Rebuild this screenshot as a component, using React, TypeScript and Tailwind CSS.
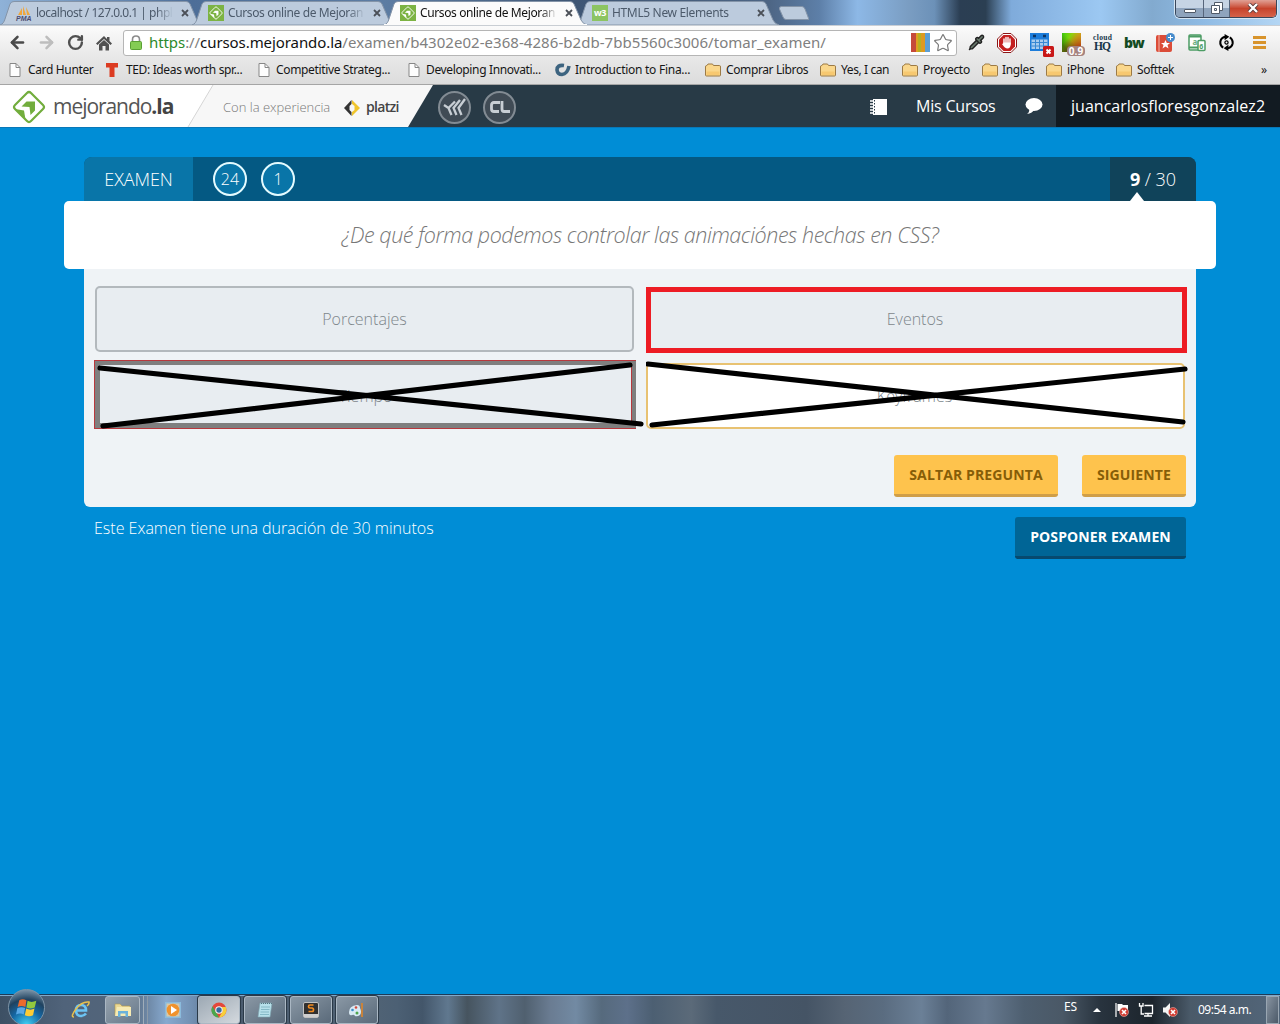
import React from "react";
import { ArrowLeft, ArrowRight, RotateCw, Star, Pipette } from "lucide-react";

function MejorandoMark({ className, color = "#fff" }: { className: string; color?: string }) {
  return (
    <svg viewBox="0 0 34 34" className={className} fill="none">
      <path d="M15 3Q17 1 19 3L31 15Q33 17 31 19L19 31Q17 33 15 31L3 19Q1 17 3 15Z" stroke={color} strokeWidth="2.200" />
      <path d="M9.500 16.500L14.500 11.500H23V20.500L18.500 25L17.500 17Z" fill={color} />
      <path d="M3 19L12 20.500L13.500 29.500Z" fill={color} />
    </svg>
  );
}

function SiteFavicon() {
  return (
    <span className="flex size-4 items-center justify-center bg-[#7cb343]">
      <MejorandoMark className="size-[14px]" />
    </span>
  );
}

function PmaFavicon() {
  return (
    <svg viewBox="0 0 16 16" className="size-4 overflow-visible">
      <path d="M2 10L6 3V10ZM7 10V1L10 10ZM11 10L10 2L14 10Z" fill="#f0a63c" />
      <text x="0" y="16" fontSize="7" fontWeight="700" fontStyle="italic" fontFamily="Liberation Sans, sans-serif" fill="#4c4c70">PMA</text>
    </svg>
  );
}

function W3Favicon() {
  return (
    <span className="flex size-4 items-center justify-center bg-[#8cc462] font-['Open_Sans',sans-serif] text-[9px] font-bold leading-none tracking-[-0.5px] text-white">w3</span>
  );
}

function Tab({ icon, label, active, track }: { icon: React.ReactNode; label: string; active?: boolean; track: string }) {
  return (
    <div className={`relative flex h-[25px] w-48 shrink-0 items-center pl-4 ${active ? "z-10" : ""}`}>
      <svg viewBox="0 0 206 25" className="absolute left-0 top-0 h-[25px] w-[206px]" fill="none">
        <path
          d="M0 25C3 24 4 22 5 19L10 4Q11 1.500 14 1.500H186Q189 1.500 190 4L197 20Q199 24 203 25Z"
          fill={active ? "#fbfbfb" : "#bccbdd"}
          stroke="#8494a8"
          strokeWidth="1"
        />
        {active && <path d="M0 25H203" stroke="#fbfbfb" strokeWidth="2" />}
      </svg>
      <span className="relative flex shrink-0">{icon}</span>
      <span className={`relative ml-1 w-[140px] whitespace-nowrap text-[12px] ${track} ${active ? "text-[#111]" : "text-[#4c5a6b]"} [mask-image:linear-gradient(to_right,black_86%,transparent_98%)]`}>{label}</span>
      <svg viewBox="0 0 8 8" className="relative ml-[5px] size-2 shrink-0">
        <path d="M1 1L7 7M7 1L1 7" stroke="#4b5058" strokeWidth="1.800" />
      </svg>
    </div>
  );
}

function PageIcon() {
  return (
    <svg viewBox="0 0 12 14" className="h-[14px] w-3">
      <path d="M1 .5H7L11 4.500V13.500H1Z" fill="#fdfdfd" stroke="#878787" />
      <path d="M7 .5V4.500H11" fill="none" stroke="#878787" />
    </svg>
  );
}

function FolderIcon() {
  return (
    <svg viewBox="0 0 16 14" className="h-[14px] w-4">
      <path d="M.5 12V4Q.5 2.500 1.500 2.500H2L3 1H7.500L8.500 2.500H14.500Q15.500 2.500 15.500 4V12Q15.500 13 14.500 13H1.500Q.5 13 .5 12Z" fill="#fad78c" stroke="#9c7a45" />
      <path d="M1.500 8.500H14.500V12H1.500Z" fill="#f7c870" />
    </svg>
  );
}

function TedIcon() {
  return (
    <svg viewBox="0 0 12 14" className="h-[14px] w-3">
      <path d="M0 0H12V4.500H8.500V14H3.500V4.500H0Z" fill="#dc3c22" />
    </svg>
  );
}

function CourseraIcon() {
  return (
    <svg viewBox="0 0 16 14" className="h-[14px] w-4" fill="none">
      <path d="M9 2.500Q2 1.500 2 7Q2.500 11.500 7 11.500Q12.500 11 14 3" stroke="#3d6480" strokeWidth="3.600" />
    </svg>
  );
}

const bookmarks: { icon: React.ReactNode; label: string; w: string; gap: string; track: string }[] = [
  { icon: <PageIcon />, label: "Card Hunter", w: "w-[97px]", gap: "ml-[7px]", track: "tracking-[-0.35px]" },
  { icon: <TedIcon />, label: "TED: Ideas worth spr...", w: "w-[152px]", gap: "ml-2", track: "tracking-[-0.36px]" },
  { icon: <PageIcon />, label: "Competitive Strateg...", w: "w-[150px]", gap: "ml-[6px]", track: "tracking-[-0.34px]" },
  { icon: <PageIcon />, label: "Developing Innovati...", w: "w-[147px]", gap: "ml-[6px]", track: "tracking-[-0.36px]" },
  { icon: <CourseraIcon />, label: "Introduction to Fina...", w: "w-[150px]", gap: "ml-1", track: "tracking-[-0.27px]" },
  { icon: <FolderIcon />, label: "Comprar Libros", w: "w-[115px]", gap: "ml-[5px]", track: "tracking-[-0.38px]" },
  { icon: <FolderIcon />, label: "Yes, I can", w: "w-[82px]", gap: "ml-[5px]", track: "tracking-[-0.4px]" },
  { icon: <FolderIcon />, label: "Proyecto", w: "w-20", gap: "ml-[5px]", track: "tracking-[-0.3px]" },
  { icon: <FolderIcon />, label: "Ingles", w: "w-16", gap: "ml-[4px]", track: "tracking-[-0.35px]" },
  { icon: <FolderIcon />, label: "iPhone", w: "w-[70px]", gap: "ml-[5px]", track: "tracking-[-0.35px]" },
  { icon: <FolderIcon />, label: "Softtek", w: "w-[70px]", gap: "ml-[5px]", track: "tracking-[-0.4px]" },
];

function WindowButtons() {
  return (
    <div className="absolute right-[3px] top-0 flex h-[18px] w-[102px] overflow-hidden rounded-b-[5px] border border-t-0 border-[#39465a] shadow-[0_0_0_1px_#d5e5f3]">
      <div className="flex w-7 items-center justify-center border-r border-[#56657b] bg-linear-to-b from-[#c6d4e4] from-45% to-[#8fa4bd] to-50%">
        <span className="mt-1 h-1 w-3 rounded-[1px] border border-[#505a68] bg-white" />
      </div>
      <div className="flex w-[26px] items-center justify-center border-r border-[#56657b] bg-linear-to-b from-[#c6d4e4] from-45% to-[#8fa4bd] to-50%">
        <svg viewBox="0 0 12 12" className="mb-[2px] size-3" fill="#fff" stroke="#505a68">
          <path d="M3.500 .5H11.500V8.500H3.500Z" />
          <path d="M.5 3.500H8.500V11.500H.5Z" />
          <path d="M3.500 6.500H5.500V8.500H3.500Z" />
        </svg>
      </div>
      <div className="flex flex-1 items-center justify-center bg-linear-to-b from-[#e0a095] from-0% via-[#c6432c] via-50% to-[#d5624a]">
        <svg viewBox="0 0 12 10" className="mb-[2px] h-[10px] w-3">
          <path d="M2 1L10 9M10 1L2 9" stroke="#5c3a3a" strokeWidth="4" />
          <path d="M2 1L10 9M10 1L2 9" stroke="#fff" strokeWidth="2.400" />
        </svg>
      </div>
    </div>
  );
}

function Extensions() {
  return (
    <div className="flex h-[22px] items-center">
      <span className="ml-[9px] flex w-5 justify-center"><Pipette className="size-[17px] fill-[#6a7a6e] text-[#222]" strokeWidth={2} /></span>
      <svg viewBox="0 0 20 20" className="ml-[11px] size-5">
        <path d="M6 .5H14L19.500 6V14L14 19.500H6L.5 14V6Z" fill="#fff" stroke="#8c1616" />
        <path d="M6.500 2H13.500L18 6.500V13.500L13.500 18H6.500L2 13.500V6.500Z" fill="#c41f1f" />
        <path d="M7 11V6M9 10V4.500M11 10V4.500M13 11V6" stroke="#fff" strokeWidth="1.400" strokeLinecap="round" />
        <path d="M6.300 9.500H13.700V12Q13 15.500 10.500 15.500Q8 15.500 5 11L6.300 10.500Z" fill="#fff" />
      </svg>
      <svg viewBox="0 0 26 24" className="ml-[13px] mt-1 h-6 w-[26px]">
        <path d="M0 0H19V18H0Z" fill="#1c7cda" />
        <path d="M1.500 6.500H17.500V16H1.500Z" fill="#a9ccee" />
        <path d="M1.500 9.500H17.500M1.500 13H17.500M5.500 6.500V16M9.500 6.500V16M13.500 6.500V16" stroke="#3988d2" />
        <path d="M3 3H6M13 3H16" stroke="#0b3464" strokeWidth="2.400" />
        <rect x="13" y="13" width="11" height="11" rx="1.500" fill="#c81818" />
        <path d="M16.500 16.500L20.500 20.500M20.500 16.500L16.500 20.500" stroke="#fff" strokeWidth="2" />
      </svg>
      <div className="relative ml-[6px] h-[19px] w-[19px] bg-[linear-gradient(135deg,#40d010_0%,#78d808_30%,#b09010_50%,#b03c10_80%)]">
        <div className="h-full w-full bg-[linear-gradient(225deg,#f0b02088,transparent_45%,#04400888_80%)]" />
        <div className="absolute -bottom-[4px] left-[5px] h-[10px] w-[18px] rounded-sm bg-[#a5837f] text-center font-['Open_Sans',sans-serif] text-[10px] font-bold leading-[10px] text-white">0.9</div>
      </div>
      <svg viewBox="0 0 20 16" className="ml-3 h-4 w-5 overflow-visible" fill="#16364a" fontFamily="Liberation Serif, serif" fontWeight="700">
        <text x="0" y="5" fontSize="7.500" textLength="19">cloud</text>
        <text x="1" y="15" fontSize="11.500" textLength="17">HQ</text>
      </svg>
      <span className="ml-[11px] w-[22px] font-['Open_Sans',sans-serif] text-[14px] font-extrabold leading-5 tracking-[-0.9px] text-[#134a22]">bw</span>
      <svg viewBox="0 0 20 20" className="ml-[9px] size-5">
        <rect x="1" y="2" width="16" height="17" rx="2" fill="#db4c38" />
        <path d="M4 2V19" stroke="#f4b5aa" />
        <path d="M10.500 7L11.800 10H15L12.500 12L13.500 15.500L10.500 13.500L7.500 15.500L8.500 12L6 10H9.200Z" fill="#fff" />
        <circle cx="15.500" cy="4.500" r="4.500" fill="#478ccc" />
        <path d="M15.500 2V7M13 4.500H18" stroke="#fff" />
      </svg>
      <svg viewBox="0 0 20 20" className="ml-[12px] size-5" fill="#fff" stroke="#4c9c64" strokeWidth="1.500">
        <rect x="2" y="2" width="12" height="15" rx="1" />
        <path d="M2 3.500H14M2 14.500H14" strokeWidth="2" />
        <rect x="11" y="7.500" width="7" height="10" rx="1" />
        <text x="5.500" y="11.500" fontSize="8" fontWeight="700" fill="#6fae80" stroke="none">a</text>
        <text x="12.200" y="15.500" fontSize="7" fontWeight="700" fill="#4c9c64" stroke="none">6</text>
      </svg>
      <svg viewBox="0 0 18 18" className="ml-[11px] size-[17px]" fill="none" stroke="#000" strokeWidth="2.200">
        <path d="M5.500 14.500Q2 12 2.500 8Q3.500 3.500 8 3M12.500 3.500Q16 6 15.500 10Q14.500 14.500 10 15" />
        <path d="M7 0L12 3L7 6.500ZM11 11.500L6 15L11 18Z" fill="#000" stroke="none" />
        <circle cx="9" cy="9" r="1.700" strokeWidth="1.300" />
      </svg>
      <div className="ml-[18px] flex w-[13px] flex-col gap-[2px]">
        <span className="h-[3px] bg-[#d8942c]" />
        <span className="h-[3px] bg-[#d8942c]" />
        <span className="h-[3px] bg-[#d8942c]" />
      </div>
    </div>
  );
}

function Browser() {
  return (
    <div className="h-[85px] shrink-0 font-['Noto_Sans',sans-serif]">
      <div className="relative flex h-[25px] bg-[linear-gradient(90deg,#8fb2d8_0%,#4d6e98_15%,#5d7da3_30%,#3f5674_45%,#4d6584_60%,#5d7fa8_64%,#8db8e6_67%,#7a9dc2_71%,#6c91b8_73%,#2b3e53_75%,#2b3f52_77%,#7fabdb_79%,#9cc8f2_86%,#82aacf_90%,#8fbbe4_94%,#b4d6f4_100%)]">
        <Tab icon={<PmaFavicon />} label="localhost / 127.0.0.1 | phpl" track="tracking-[-0.5px]" />
        <Tab icon={<SiteFavicon />} label="Cursos online de Mejoran" track="tracking-[-0.38px]" />
        <Tab icon={<SiteFavicon />} label="Cursos online de Mejoran" active track="tracking-[-0.38px]" />
        <Tab icon={<W3Favicon />} label="HTML5 New Elements" track="tracking-[-0.35px]" />
        <svg viewBox="0 0 30 14" className="ml-[11px] mt-[6px] h-[14px] w-[30px]">
          <path d="M2 .5H23Q25 .5 26 3L30 13.500H7Q5 13.500 4 11L0 2Z" fill="#bccbdd" stroke="#8494a8" />
        </svg>
        <WindowButtons />
      </div>
      <div className="flex h-[32px] items-center border-t border-[#c9ced4] bg-linear-to-b from-[#fbfbfb] to-[#e8e8e8] pt-[2px]">
        <ArrowLeft className="ml-2 size-[19px] text-[#4a4a4a]" strokeWidth={3.2} />
        <ArrowRight className="ml-[10px] size-[19px] text-[#bdbdbd]" strokeWidth={3.2} />
        <RotateCw className="ml-[11px] size-[17px] text-[#505050]" strokeWidth={3.4} />
        <svg viewBox="0 0 16 16" className="ml-[12px] size-[16px]" fill="#505050">
          <path d="M8 1L0 8.500L1.500 10L8 4L14.500 10L16 8.500L13.500 6V2H11V4Z" />
          <path d="M3 9.500L8 5L13 9.500V15.500H9.500V11H6.500V15.500H3Z" />
        </svg>
        <div className="ml-[11px] flex h-[26px] w-[834px] shrink-0 items-center rounded-[3px] border border-[#b5b5b5] bg-white pl-[6px]">
          <svg viewBox="0 0 12 15" className="h-[15px] w-3">
            <path d="M2.500 7V4.500Q2.500 1 6 1T9.500 4.500V7" fill="none" stroke="#8b8b8b" strokeWidth="1.600" />
            <rect x=".5" y="6.500" width="11" height="8" rx="1" fill="#84cc54" stroke="#5aa034" />
          </svg>
          <span className="mb-[2px] ml-[7px] w-[750px] whitespace-nowrap text-[15px] leading-5 text-[#808080]">
            <span className="tracking-[-0.08px]"><span className="text-[#2c8a2c]">https</span>://<span className="text-[#111]">cursos.mejorando.la</span></span><span className="tracking-[0.05px]">/examen/b4302e02-e368-4286-b2db-7bb5560c3006/tomar_examen/</span>
          </span>
          <span className="ml-[12px] h-[19px] w-[19px] shrink-0 bg-[linear-gradient(90deg,#c54a3a_0_27%,#e0a020_27%_38%,#b8b020_38%_55%,#dd9a20_55%_75%,#5c9fd4_75%)]" />
          <Star className="ml-[3px] size-[20px] shrink-0 text-[#777]" strokeWidth={1.4} />
        </div>
        <Extensions />
      </div>
      <div className="flex h-[28px] items-center border-b border-[#a5a5a5] bg-linear-to-b from-[#e8e8e8] to-[#dcdcdc] pb-[2px] pl-[9px] text-[12px] text-[#161616]">
        {bookmarks.map((b) => (
          <div key={b.label} className={`flex shrink-0 items-center whitespace-nowrap ${b.w}`}>
            {b.icon}
            <span className={`${b.gap} ${b.track}`}>{b.label}</span>
          </div>
        ))}
        <span className="ml-auto pr-[13px] text-[12px]">»</span>
      </div>
    </div>
  );
}

function SiteHeader() {
  return (
    <header className="relative flex h-[42px] shrink-0 items-center bg-[#283a46] text-white">
      <svg viewBox="0 0 434 42" className="absolute left-0 top-0 h-[42px] w-[434px]">
        <path d="M0 0H433L408 42H0Z" fill="#f7f7f7" />
        <path d="M0 0H213L188 42H0Z" fill="#fff" />
        <path d="M213 0L188 42" stroke="#d5d5d5" />
      </svg>
      <div className="relative flex h-full w-[434px] items-center">
        <MejorandoMark className="ml-3 mt-[2px] size-[34px]" color="#72ad3d" />
        <span className="ml-[7px] mt-px w-[121px] whitespace-nowrap text-[21px] tracking-[-1.05px] text-[#555]">mejorando<b className="text-[#444]">.la</b></span>
        <span className="ml-[49px] mt-[3px] w-[108px] whitespace-nowrap text-[13px] font-light text-[#777]">Con la experiencia</span>
        <svg viewBox="0 0 16 16" className="ml-[13px] mt-[3px] size-4">
          <path d="M7.500 0L0 8L7.500 16V12L5.500 10V6L7.500 4Z" fill="#333" />
          <path d="M8 0L16 8L8 16V12L10.500 10V6L8 4Z" fill="#f0c52c" />
        </svg>
        <span className="ml-[6px] mt-[1px] text-[14px] font-semibold tracking-[-0.7px] text-[#444]">platzi</span>
      </div>
      <div className="relative ml-1 mt-[2px] flex size-[33px] items-center justify-center rounded-full border-2 border-[#828b93] bg-[#404b55]">
        <svg viewBox="0 0 24 20" className="h-5 w-6" fill="none" stroke="#c8ced4" strokeWidth="2.300">
          <path d="M1 8L5.500 11L8.500 18M12 4.500L5.500 11M17 3L10.500 11L13.500 18M22 2L15.500 11L18.500 18" />
        </svg>
      </div>
      <div className="relative ml-3 mt-[2px] flex size-[33px] items-center justify-center rounded-full border-2 border-[#828b93] bg-[#404b55]">
        <svg viewBox="0 0 20 12" className="h-3 w-5" stroke="#c8ced4" strokeWidth="2.800" fill="none">
          <path d="M10 1.500H4Q1.500 1.500 1.500 4V8Q1.500 10.500 4 10.500H9M12 0V8Q12 10.500 14 10.500H20" />
        </svg>
      </div>
      <svg viewBox="0 0 17 16" className="ml-auto mt-px h-4 w-[17px]">
        <path d="M3 0H17V16H3Z" fill="#fff" />
        <path d="M0 2H5M0 5H5M0 8H5M0 11H5M0 14H5" stroke="#fff" strokeWidth="1.500" />
        <path d="M4.500 1V15" stroke="#283a46" strokeWidth="1" strokeDasharray="1.500 1.500" />
      </svg>
      <span className="ml-[29px] w-[80px] whitespace-nowrap text-[16px] tracking-[-0.2px]">Mis Cursos</span>
      <svg viewBox="0 0 18 16" className="ml-[29px] mr-[13px] h-4 w-[18px]">
        <ellipse cx="9" cy="6.500" rx="8.500" ry="6.500" fill="#fff" />
        <path d="M4 10Q5 14 2 16Q7 15.500 9 12Z" fill="#fff" />
      </svg>
      <div className="flex h-full w-56 items-center whitespace-nowrap bg-[#121b22] pl-[15px] text-[16px] tracking-[0.03px]">juancarlosfloresgonzalez2</div>
    </header>
  );
}

function Cross({ d, className }: { d: string; className: string }) {
  return (
    <svg viewBox="0 0 552 72" className={`pointer-events-none absolute h-[72px] w-[552px] ${className}`} fill="none">
      <path d={d} stroke="#000" strokeWidth="5.200" strokeLinecap="round" />
    </svg>
  );
}

function Exam() {
  return (
    <main className="flex-1 border-t border-[#0878b8] bg-[#008dd6] px-16 pt-[29px]">
      <div className="mx-5 flex h-11 overflow-hidden rounded-t-lg bg-[#045983] text-[18px] font-light text-white">
        <div className="flex w-[109px] items-center justify-center bg-[#0975a8] text-[18px] tracking-[-0.1px]">EXAMEN</div>
        <div className="ml-5 flex items-center gap-[14px] text-[16px]">
          <span className="flex size-[34px] items-center justify-center rounded-full border-2 border-[#e4fbff] bg-[#0975a8]">24</span>
          <span className="flex size-[34px] items-center justify-center rounded-full border-2 border-[#e4fbff] bg-[#0975a8]">1</span>
        </div>
        <div className="relative ml-auto flex w-[86px] items-center justify-center whitespace-pre bg-[#10435a] tracking-[-0.05px]">
          <span className="font-bold">9</span> / 30
          <span className="absolute bottom-0 left-5 size-0 border-x-[7px] border-b-[9px] border-x-transparent border-b-white" />
        </div>
      </div>
      <div className="relative flex h-[68px] items-center justify-center rounded-[5px] bg-white pt-px text-[21.500px] font-light italic tracking-[-0.44px] text-[#777]">
        <span className="whitespace-nowrap">¿De qué forma podemos controlar las animaciónes hechas en CSS?</span>
      </div>
      <div className="mx-5 h-[238px] rounded-b-[6px] bg-[#eff3f6] px-[10px] pt-[17px] text-[16px] font-light text-[#7d868b]">
        <div className="grid grid-cols-[541px_541px] gap-x-[10px]">
          <div className="ml-px mr-px flex h-[66px] items-center justify-center rounded-[5px] border-2 border-[#b3b9bd] bg-[#e8edf1]">Porcentajes</div>
          <div className="-mr-px ml-px mt-px flex h-[66px] items-center justify-center border-[5px] border-[#ed1c24] bg-[#e8edf1] pb-0.5 pr-[3px]">Eventos</div>
        </div>
        <div className="mt-[7px] grid grid-cols-[542px_541px] gap-x-[9px]">
          <div className="relative flex h-[69px] items-center justify-center border border-r-0 border-[#b8383d] bg-[#7f7f7f] pb-[5px] pl-[5px] pr-1 pt-1">
            <div className="flex h-full w-full items-center justify-center border-r border-[#b8383d] bg-[#e8edf1]">
              <span className="pt-1">Tiempo</span>
            </div>
            <Cross className="-left-px -top-px" d="M6 8L547 64M9 66L536 5" />
          </div>
          <div className="relative ml-px mt-[3px] flex h-[66px] w-[539px] items-center justify-center rounded-[5px] border-2 border-[#e8c272] bg-white pr-[2px]">
            Keyframes
            <Cross className="-left-[2px] -top-[5px]" d="M2 4L537 62M6 65L539 9" />
          </div>
        </div>
        <div className="mt-[26px] flex justify-end gap-6 text-[14px] font-bold text-[#865d08]">
          <div className="flex h-[42px] w-[164px] items-center justify-center whitespace-nowrap rounded-[3px] border-b-[3px] border-[#cf9e48] bg-[#fec34d] tracking-[0.12px]">SALTAR PREGUNTA</div>
          <div className="flex h-[42px] w-[104px] items-center justify-center whitespace-nowrap rounded-[3px] border-b-[3px] border-[#cf9e48] bg-[#fec34d] tracking-[0.12px]">SIGUIENTE</div>
        </div>
      </div>
      <div className="mx-[30px] mt-[10px] flex items-start justify-between text-white">
        <span className="whitespace-nowrap text-[16px] font-light leading-[22px]">Este Examen tiene una duración de 30 minutos</span>
        <div className="flex h-[42px] w-[171px] items-center justify-center whitespace-nowrap rounded-[3px] border-b-[3px] border-[#07496e] bg-[#006596] text-[14px] font-bold tracking-[0.12px]">POSPONER EXAMEN</div>
      </div>
    </main>
  );
}

function TaskButton({ children, bright }: { children: React.ReactNode; bright?: boolean }) {
  return (
    <div className={`flex h-7 w-[42px] shrink-0 items-center justify-center rounded-[3px] border border-[#aab7c3] shadow-[0_0_0_1px_#2a3947] ${bright ? "bg-linear-to-br from-[#9da9b4] to-[#d4d9de]" : "bg-linear-to-br from-[#8a98a5] to-[#5a6a7a]"}`}>
      {children}
    </div>
  );
}

function RedX({ x, y }: { x: number; y: number }) {
  return (
    <g>
      <circle cx={x} cy={y} r="4.500" fill="#cf3a30" stroke="#edc4c0" strokeWidth=".5" />
      <path d={`M${x - 2} ${y - 2}l4 4m0-4l-4 4`} stroke="#fff" strokeWidth="1.600" />
    </g>
  );
}

function Taskbar() {
  return (
    <footer className="relative flex h-[30px] shrink-0 items-center border-t border-[#1d3b58] bg-[linear-gradient(90deg,#3d5064_0%,#50637a_5%,#53657a_10%,#87a9cf_13%,#7290b2_15%,#4a5b6e_18%,#516375_29%,#4c6074_31%,#43566a_33%,#60788f_35%,#46545f_36.500%,#5f7388_39%,#50606f_41%,#6a7c92_43%,#728aa3_45%,#566a7d_47%,#5d708a_49%,#4c5f72_51%,#5b6a79_54%,#47586a_56%,#455465_63%,#566474_66%,#5a6c80_69%,#6b8097_72%,#53657a_74%,#66798f_77%,#4e5f70_80%,#4a5866_83%,#28333e_86%,#1c242c_90%,#4a5a69_93%,#53667a_100%)] font-['Noto_Sans',sans-serif] text-[12px] text-white shadow-[inset_0_1px_0_#7fa9cb]">
      <div className="absolute -top-[6px] left-[8px] flex size-[37px] items-center justify-center rounded-full border border-[#7c93a6] bg-[radial-gradient(circle_at_50%_100%,#42d2f5_0%,#1467a4_40%,#20425f_65%,#9fb4c5_100%)]">
        <svg viewBox="0 0 20 20" className="size-[22px]">
          <path d="M3 3Q6 1 9.500 3L8.500 9Q5 7.500 1.500 9Z" fill="#ec6a2c" />
          <path d="M10.500 3.500Q14 5.500 18.500 3.500L17 9.500Q13 11.500 9.500 9.500Z" fill="#92c83e" />
          <path d="M1.300 10Q5 8.500 8.300 10L7 16Q4 14 0 16Z" fill="#59a8e6" />
          <path d="M9.300 10.500Q13 12.500 16.800 10.500L15.500 16.500Q12 18.500 8 16.500Z" fill="#fccb34" />
        </svg>
      </div>
      <div className="ml-[71px] flex w-[34px] items-center">
        <svg viewBox="0 0 20 18" className="h-[18px] w-5" fill="none">
          <path d="M15 12.500Q13 15 10 15Q5 15 5 9.500T10 4Q15 4 15 9.500H6" stroke="#6cc4f4" strokeWidth="2.600" />
          <path d="M3 16Q-1 16 5 8T18 1Q18.500 3 16 5" stroke="#e9c04c" strokeWidth="1.500" />
        </svg>
      </div>
      <div className="flex items-center">
        <div className="flex h-7 w-[35px] items-center justify-center rounded-[3px] border border-[#aab7c3] bg-linear-to-br from-[#97a3ae] to-[#66788a]">
          <svg viewBox="0 0 18 16" className="h-4 w-[18px]">
            <path d="M1 2H6L8 4H16V13H1Z" fill="#ecd994" stroke="#b49a50" strokeWidth=".6" />
            <path d="M3 5H17V14H1Z" fill="#f7ebb4" />
            <path d="M4 15V9H14V15H11.500V11.500H6.500V15Z" fill="#6cb2da" />
          </svg>
        </div>
        <span className="ml-px h-7 w-[3px] border-r border-[#a0adb9]" />
        <span className="h-7 w-1 border-r border-[#8c9aa8]" />
      </div>
      <svg viewBox="0 0 16 16" className="ml-[17px] size-4">
        <path d="M0 0H16V16H0Z" fill="#8bbbdc" />
        <path d="M1.500 1.500H14.500V14.500H1.500Z" fill="#d9c8a8" />
        <circle cx="8" cy="8" r="6.300" fill="#f0922c" />
        <path d="M6 4L12 8L6 12Z" fill="#fff" />
      </svg>
      <div className="ml-[17px] flex gap-1">
        <TaskButton bright>
          <svg viewBox="0 0 16 16" className="size-4">
            <circle cx="8" cy="8" r="7.500" fill="#e4473a" />
            <path d="M1.500 4.250L8 15.500A7.500 7.500 0 0 1 1.500 4.250Z" fill="#49a84c" />
            <path d="M8 15.500L11.500 9.500L11 5H14.800A7.500 7.500 0 0 1 8 15.500Z" fill="#f7cf3a" />
            <circle cx="8" cy="8" r="3.800" fill="#f4f4f4" />
            <circle cx="8" cy="8" r="2.700" fill="#356a9c" />
          </svg>
        </TaskButton>
        <TaskButton>
          <svg viewBox="0 0 16 16" className="size-4">
            <path d="M3 1H15L13 15H1Z" fill="#b7e0ea" stroke="#7fa8b4" strokeWidth=".6" />
            <path d="M4 5H13M4 7.500H12.500M3.500 10H12M3 12.500H12" stroke="#78aebc" strokeWidth=".8" />
            <path d="M4 1.500H15" stroke="#557480" strokeDasharray="1 1" />
          </svg>
        </TaskButton>
        <TaskButton>
          <svg viewBox="0 0 16 16" className="size-4">
            <rect x=".5" y=".5" width="15" height="15" rx="1.500" fill="#303030" stroke="#c0c0c0" />
            <path d="M1 12H15V15H1Z" fill="#cfcfcf" />
            <path d="M10.500 3H7Q5.500 3 5.500 4.500T7 6H9Q10.500 6 10.500 7.800T9 9.500H5.500" fill="none" stroke="#f28c20" strokeWidth="1.700" />
          </svg>
        </TaskButton>
        <TaskButton>
          <svg viewBox="0 0 18 16" className="h-4 w-[18px]">
            <path d="M9 3Q1 4 1 10Q1 14 4 13Q6 12 7 14Q9 15 12 13Q14 10 12 6Q12 3 9 3Z" fill="#d9eaf4" />
            <circle cx="4.500" cy="8" r="1.300" fill="#3d8ec8" />
            <circle cx="8" cy="5.500" r="1.300" fill="#d24a3a" />
            <circle cx="9" cy="11" r="1.500" fill="#4fa64c" />
            <path d="M14 1V15" stroke="#c8833c" strokeWidth="2" />
          </svg>
        </TaskButton>
      </div>
      <span className="ml-auto mb-[6px] text-[12px] tracking-[-0.1px]">ES</span>
      <svg viewBox="0 0 8 4" className="ml-4 h-1 w-2"><path d="M0 4L4 0L8 4Z" fill="#fff" /></svg>
      <svg viewBox="0 0 16 16" className="ml-[13px] size-4">
        <path d="M2 1V15" stroke="#fff" strokeWidth="1.200" />
        <path d="M3.500 2H8L9 3H14V9H3.500Z" fill="#fff" />
        <RedX x={10} y={10} />
      </svg>
      <svg viewBox="0 0 16 16" className="ml-2 size-4" fill="none" stroke="#fff" strokeWidth="1.300">
        <path d="M6.500 3.500H14.500V11.500H6.500M10 11.500V14M6 14H14M1.500 1V4H5V1M3.200 4V12H6" />
      </svg>
      <svg viewBox="0 0 16 16" className="ml-2 size-4">
        <path d="M1 5.500H3.500L8 1V15L3.500 10.500H1Z" fill="#f4f4f4" />
        <RedX x={11} y={10} />
      </svg>
      <span className="ml-5 w-[55px] whitespace-nowrap text-[12px] tracking-[-0.5px]">09:54 a.m.</span>
      <span className="ml-[13px] mr-px h-7 w-[13px] border border-[#99a6b2] bg-linear-to-br from-[#8793a0] to-[#4c5a69]" />
    </footer>
  );
}

export default function App() {
  return (
    <div className="flex h-[1024px] w-[1280px] flex-col overflow-hidden bg-[#008dd6] font-['Open_Sans',sans-serif]">
      <Browser />
      <SiteHeader />
      <Exam />
      <Taskbar />
    </div>
  );
}
